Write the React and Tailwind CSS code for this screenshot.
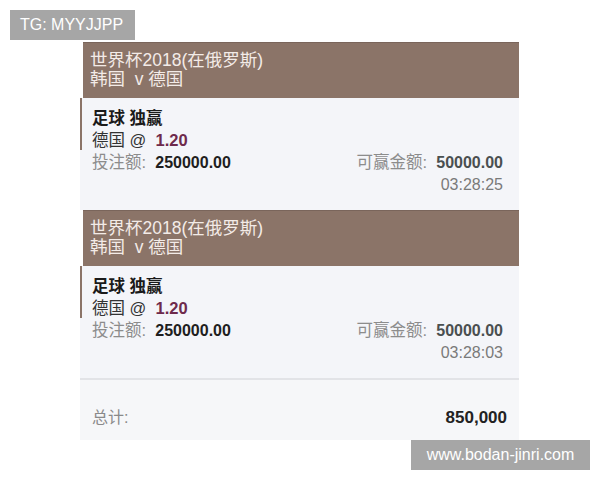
const bets = [
  { time: "03:28:25" },
  { time: "03:28:03" },
];

const font = { fontFamily: '"Liberation Sans", "Noto Sans CJK SC", sans-serif' };

const BetCard = ({ time }) => (
  <div>
    <div className="ml-[3px] h-[56px] bg-[#8b7468] border-t border-[#7a655b] px-[7px] pt-[8px] text-[17.5px] leading-[19px] text-[#f3ebe7]">
      <div>世界杯2018(在俄罗斯)</div>
      <div>韩国&nbsp;&nbsp;v 德国</div>
    </div>
    <div className="flex h-[112px] bg-[#f4f5f9]">
      <div className="w-[2px] h-[52px] bg-[#8b7468]"></div>
      <div className="flex-1 pl-[10px] pr-[16px] pt-[9px] text-[16.5px] leading-[22px]">
        <div className="font-bold text-[#1a1a1a]">足球 独赢</div>
        <div className="text-[#333]">
          德国 @&nbsp;&nbsp;<span className="font-bold text-[#6e2a4c]">1.20</span>
        </div>
        <div className="flex justify-between">
          <div>
            <span className="text-[#8c8c8c]">投注额:&nbsp;&nbsp;</span>
            <span className="font-bold text-[#1e1e1e] text-[16px]">250000.00</span>
          </div>
          <div>
            <span className="text-[#8c8c8c]">可赢金额:&nbsp;&nbsp;</span>
            <span className="font-bold text-[#4a4f50] text-[16px]">50000.00</span>
          </div>
        </div>
        <div className="text-right text-[#7a7a7a] text-[16px]">{time}</div>
      </div>
    </div>
  </div>
);

const App = () => {
  return (
    <div className="relative w-[600px] h-[480px] bg-white overflow-hidden" style={font}>
      <div className="absolute left-[10px] top-[10px] w-[125px] h-[30px] bg-[#a6a6a6] text-white text-[16px] leading-[30px] pl-[10px]">
        TG: MYYJJPP
      </div>

      <div className="ml-[80px] w-[439px] pt-[42px]">
        {bets.map((b, i) => (
          <BetCard key={i} time={b.time} />
        ))}
        <div className="h-[2px] bg-[#e2e3e7]"></div>
        <div className="h-[60px] bg-[#f6f7f9] flex items-center justify-between pl-[12px] pr-[12px] pt-[16px]">
          <span className="text-[#8a8a8a] text-[16px]">总计:</span>
          <span className="font-bold text-[#222] text-[17px] leading-[20px]">850,000</span>
        </div>
      </div>

      <div className="absolute left-[411px] top-[440px] w-[179px] h-[30px] bg-[#a6a6a6] text-white text-[16px] leading-[30px] text-center">
        www.bodan-jinri.com
      </div>
    </div>
  );
};

export default App;
